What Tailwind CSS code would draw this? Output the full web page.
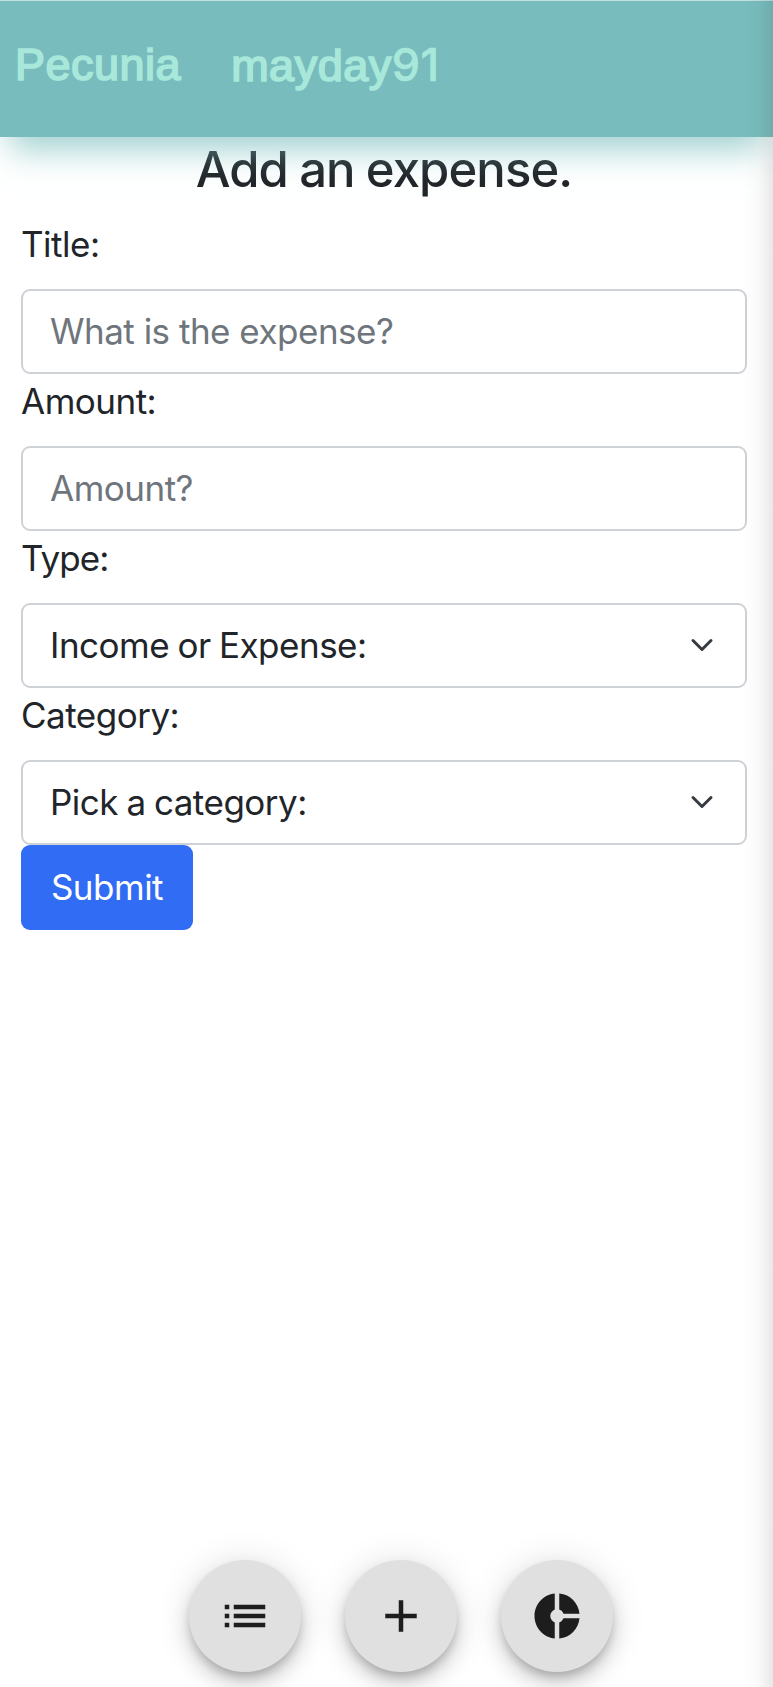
<!DOCTYPE html>
<html lang="en">
<head>
<meta charset="utf-8">
<title>Pecunia</title>
<script src="https://cdn.jsdelivr.net/npm/@tailwindcss/browser@4"></script>
</head>
<body class="bg-white">
<div class="relative flex h-[1687px] w-[773px] flex-col overflow-hidden bg-white font-['Inter',sans-serif] text-[35px] tracking-[-0.5px] text-[#212529] [word-spacing:-1px]">
  <nav class="relative z-10 flex h-[137px] shrink-0 items-center gap-[50px] border-t border-[#bfe0e0] bg-[#79bcbd] pb-[8px] pl-[15px] font-['Liberation_Sans',sans-serif] text-[45px] tracking-[0.5px] text-[#a8e8da] shadow-[0_22px_32px_-10px_rgba(121,188,189,0.72)] [-webkit-text-stroke:1.7px_#a8e8da]">
    <a>Pecunia</a>
    <a>mayday<span class="font-['Inter',sans-serif] text-[45px] font-medium tracking-[0.5px] [-webkit-text-stroke:0.5px_#a8e8da]">91</span></a>
  </nav>
  <main class="flex flex-col pl-[21px] pr-[26px]">
    <h1 class="h-[83px] pt-[3px] text-center text-[49px] font-medium leading-[60px] tracking-[-0.9px]">Add an expense.</h1>
    <form class="flex flex-col items-start">
      <label class="mb-[15px] h-[54px] leading-[48px]">Title:</label>
      <input type="text" placeholder="What is the expense?" class="h-[85px] w-full rounded-[9px] border-2 border-[#ced2d7] bg-white px-[27px] pb-[2px] placeholder:text-[#6f757c]">
      <label class="mb-[18px] h-[54px] leading-[54px]">Amount:</label>
      <input type="text" placeholder="Amount?" class="h-[85px] w-full rounded-[9px] border-2 border-[#ced2d7] bg-white px-[27px] pb-[2px] placeholder:text-[#6f757c]">
      <label class="mb-[18px] h-[54px] leading-[54px] tracking-[-0.9px]">Type:</label>
      <div class="flex h-[85px] w-full items-center justify-between rounded-[9px] border-2 border-[#ced2d7] bg-white pl-[27px] pr-[31px]">
        <span>Income or Expense:</span>
        <svg class="mb-[2px] size-6" viewBox="0 0 16 16" fill="none" stroke="#343a40" stroke-width="2" stroke-linecap="round" stroke-linejoin="round"><path d="m2 5 6 6 6-6"/></svg>
      </div>
      <label class="mb-[18px] h-[54px] leading-[54px]">Category:</label>
      <div class="flex h-[85px] w-full items-center justify-between rounded-[9px] border-2 border-[#ced2d7] bg-white pl-[27px] pr-[31px]">
        <span>Pick a category:</span>
        <svg class="mb-[2px] size-6" viewBox="0 0 16 16" fill="none" stroke="#343a40" stroke-width="2" stroke-linecap="round" stroke-linejoin="round"><path d="m2 5 6 6 6-6"/></svg>
      </div>
      <button type="button" class="h-[85px] w-[172px] rounded-[9px] bg-[#316cf4] text-white">Submit</button>
    </form>
  </main>
  <footer class="mb-[15px] mt-auto flex gap-[44px] pl-[189px]">
    <button type="button" class="flex size-28 items-center justify-center rounded-full bg-[#e0e0e0] shadow-[0_6px_10px_-2px_rgba(0,0,0,0.2),0_12px_20px_0_rgba(0,0,0,0.14),0_2px_36px_0_rgba(0,0,0,0.12)]">
      <svg class="size-[54px]" viewBox="0 0 24 24" fill="#1d1d1d"><path d="M3 13h2v-2H3v2zm0 4h2v-2H3v2zm0-8h2V7H3v2zm4 4h14v-2H7v2zm0 4h14v-2H7v2zM7 7v2h14V7H7z"/></svg>
    </button>
    <button type="button" class="flex size-28 items-center justify-center rounded-full bg-[#e0e0e0] shadow-[0_6px_10px_-2px_rgba(0,0,0,0.2),0_12px_20px_0_rgba(0,0,0,0.14),0_2px_36px_0_rgba(0,0,0,0.12)]">
      <svg class="size-[54px]" viewBox="0 0 24 24" fill="#1d1d1d"><path d="M19 13h-6v6h-2v-6H5v-2h6V5h2v6h6v2z"/></svg>
    </button>
    <button type="button" class="flex size-28 items-center justify-center rounded-full bg-[#e0e0e0] shadow-[0_6px_10px_-2px_rgba(0,0,0,0.2),0_12px_20px_0_rgba(0,0,0,0.14),0_2px_36px_0_rgba(0,0,0,0.12)]">
      <svg class="size-[54px]" viewBox="0 0 24 24" fill="#1d1d1d"><path d="M11 9.16V2c-5 .5-9 4.79-9 10s4 9.5 9 10v-7.16c-1-.41-2-1.52-2-2.84s1-2.43 2-2.84zM14.86 11H22c-.48-4.75-4-8.53-9-9v7.16c1 .3 1.52.98 1.86 1.84zM13 14.84V22c5-.47 8.52-4.25 9-9h-7.14c-.34.86-.86 1.54-1.86 1.84z"/></svg>
    </button>
  </footer>
  <div class="pointer-events-none absolute inset-y-0 right-0 z-20 w-[30px] bg-linear-to-r from-black/0 via-black/2 to-black/9"></div>
</div>
</body>
</html>
